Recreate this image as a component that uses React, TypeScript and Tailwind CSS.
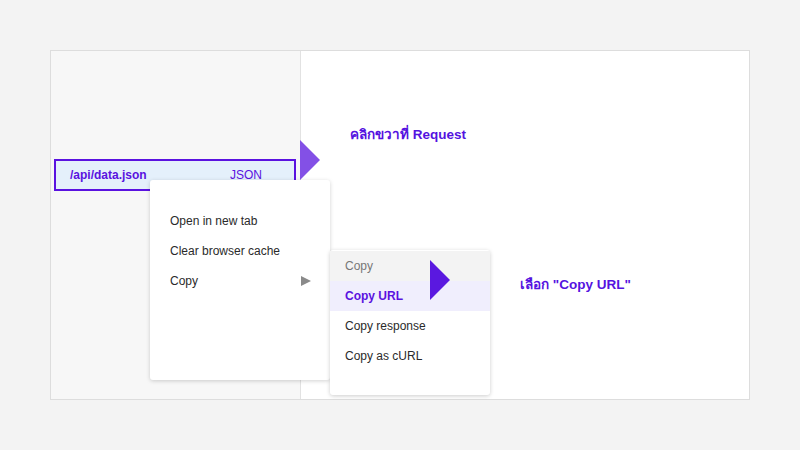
import React from "react";

const menuItems = ["Open in new tab", "Clear browser cache"];

function Triangle({ className }: { className: string }) {
  return (
    <svg width="20" height="40" viewBox="0 0 20 40" className={className}>
      <polygon points="0,0 20,20 0,40" />
    </svg>
  );
}

export default function App() {
  return (
    <div className="h-[450px] w-[800px] bg-[#f3f3f3] p-[50px] font-['Liberation_Sans',Arial,sans-serif]">
      <div className="relative flex h-[350px] w-[700px] border border-[#dddddd] bg-white">
        {/* Network list */}
        <div className="w-[250px] border-r border-[#e2e2e2] bg-[#f7f7f7] pt-[108px] pl-[3px]">
          <div className="flex h-[32px] w-[242px] items-center justify-between border-2 border-[#5a12e0] bg-[#e4f0fb] pl-[14px] pr-[32px] text-[12px] text-[#5a12e0]">
            <span className="font-bold">/api/data.json</span>
            <span>JSON</span>
          </div>
        </div>
        <div className="flex-1" />

        {/* Annotations */}
        <Triangle className="absolute left-[249px] top-[89px] fill-[#8350e6]" />
        <div className="absolute left-[299px] top-[74px] text-[13.5px] font-bold text-[#5512e0]">
          คลิกขวาที่ Request
        </div>
        <div className="absolute left-[469px] top-[224px] text-[13.5px] font-bold text-[#5512e0]">
          เลือก "Copy URL"
        </div>

        {/* Context menu */}
        <div className="absolute left-[99px] top-[129px] flex h-[200px] w-[180px] flex-col rounded-[3px] bg-white pt-[26px] text-[12px] text-[#2a2a2a] shadow-[0_1px_4px_rgba(0,0,0,0.18)]">
          {menuItems.map((item) => (
            <div key={item} className="flex h-[30px] items-center pl-[20px]">
              {item}
            </div>
          ))}
          <div className="flex h-[30px] items-center justify-between pl-[20px] pr-[19px]">
            <span>Copy</span>
            <svg width="10" height="10" viewBox="0 0 10 10" className="fill-[#8a8a8a]">
              <polygon points="0,0 10,5 0,10" />
            </svg>
          </div>
        </div>

        {/* Submenu */}
        <div className="absolute left-[279px] top-[199px] flex h-[145px] w-[160px] flex-col rounded-[3px] bg-white pt-px text-[12px] text-[#2a2a2a] shadow-[0_1px_4px_rgba(0,0,0,0.2)]">
          <div className="flex h-[30px] items-center bg-[#f3f3f3] pl-[15px] text-[#777777]">
            Copy
          </div>
          <div className="flex h-[30px] items-center bg-[#f0eefd] pl-[15px] font-bold text-[#5a12e0]">
            Copy URL
          </div>
          <div className="flex h-[30px] items-center pl-[15px]">Copy response</div>
          <div className="flex h-[30px] items-center pl-[15px]">Copy as cURL</div>
        </div>
        <Triangle className="absolute left-[379px] top-[209px] fill-[#5a18e0]" />
      </div>
    </div>
  );
}
